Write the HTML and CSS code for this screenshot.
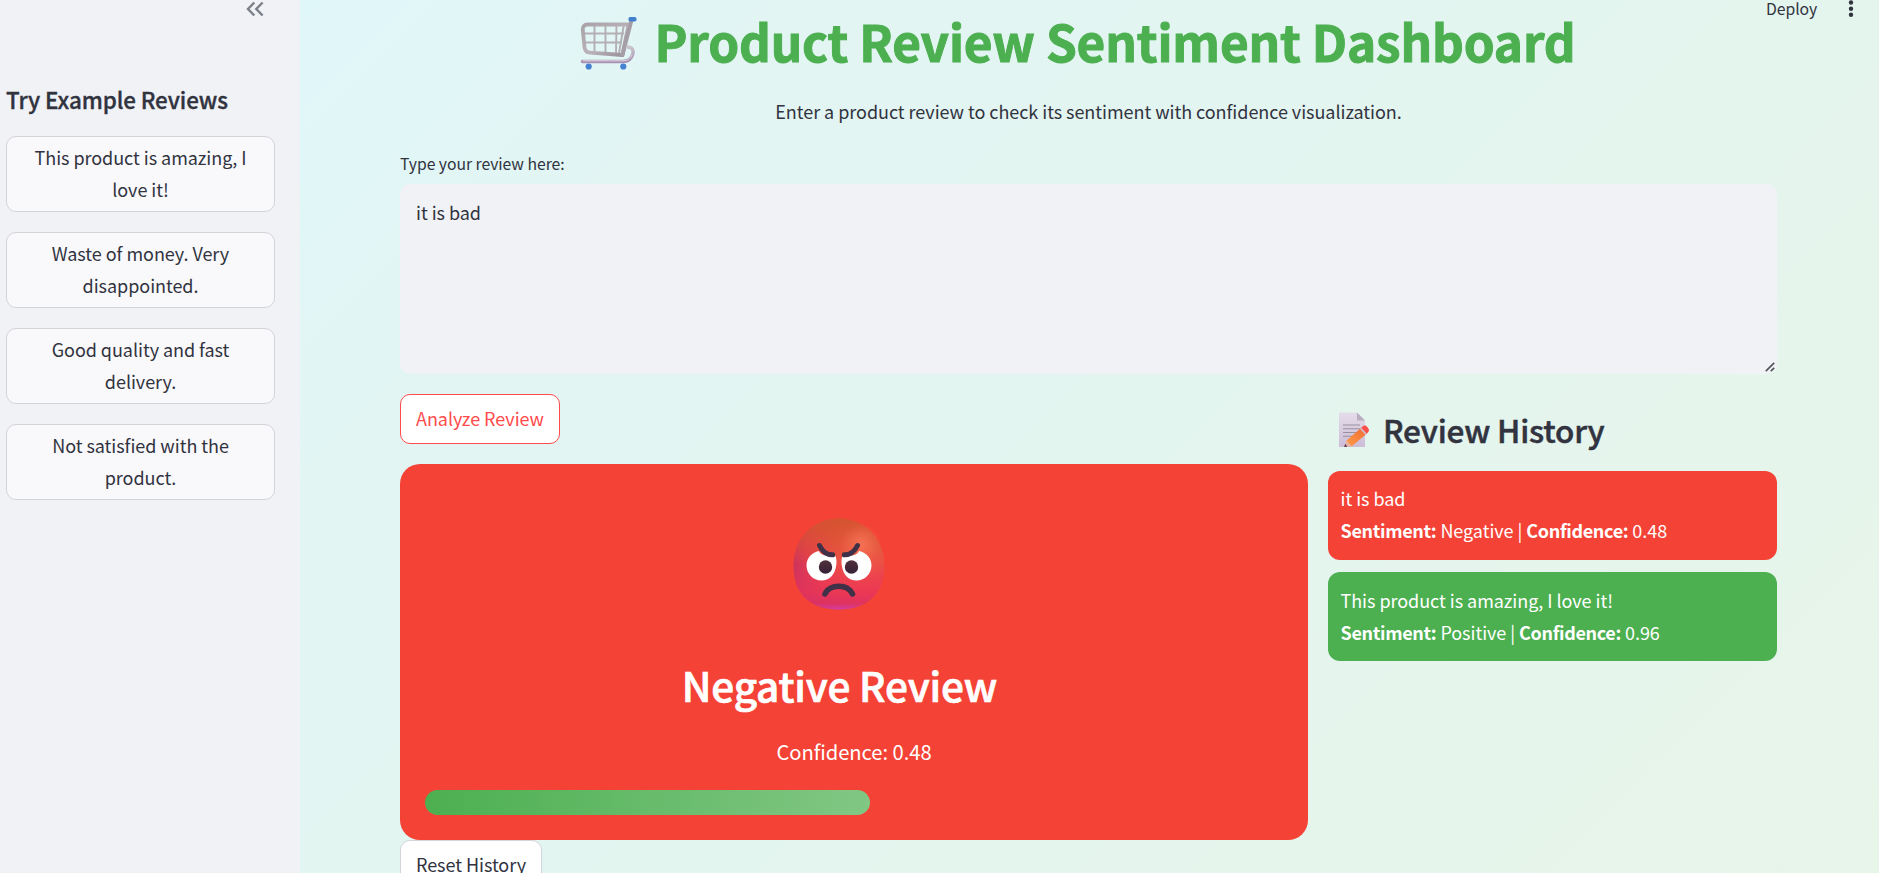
FILE: index.html
```html
<!DOCTYPE html>
<html lang="en">
<head>
<meta charset="utf-8">
<title>Product Review Sentiment Dashboard</title>
<link rel="stylesheet" href="styles.css">
</head>
<body>
<div class="app">
  <aside class="sidebar">
    <div class="sidebar-head">
      <svg class="collapse" width="18" height="16" viewBox="0 0 18 16" fill="none" stroke="#7c7e88" stroke-width="2.400"><path d="M8.300 1.500 2 8l6.300 6.500M16.600 1.500 10.300 8l6.300 6.500"/></svg>
    </div>
    <h3 class="side-title">Try Example Reviews</h3>
    <div class="examples">
      <button class="btn example">This product is amazing, I<br>love it!</button>
      <button class="btn example">Waste of money. Very<br>disappointed.</button>
      <button class="btn example">Good quality and fast<br>delivery.</button>
      <button class="btn example">Not satisfied with the<br>product.</button>
    </div>
  </aside>
  <main class="main">
    <div class="toolbar">
      <span class="deploy">Deploy</span>
      <svg class="dots" width="6" height="24" viewBox="0 0 6 24" fill="#31333f"><circle cx="3" cy="2.500" r="2.200"/><circle cx="3" cy="8.700" r="2.200"/><circle cx="3" cy="14.800" r="2.200"/></svg>
    </div>
    <h1 class="title">
      <svg class="cart" width="57" height="55" viewBox="0 0 57 55" fill="none">
        <defs>
          <linearGradient id="metal" x1="0" y1="0" x2="1" y2="1"><stop offset="0" stop-color="#aaa3a8"/><stop offset=".55" stop-color="#b9b2b8"/><stop offset="1" stop-color="#968c98"/></linearGradient>
          <linearGradient id="rail" x1="0" y1="0" x2="0" y2="1"><stop offset="0" stop-color="#c9c4ca"/><stop offset="1" stop-color="#a891b5"/></linearGradient>
        </defs>
        <path d="M14.500 8v28M25.500 8v29M36.500 8l-.5 29M44 8l-5 29M4 17.500h40M4 26.500h38" stroke="#b3afb3" stroke-width="1.900"/>
        <path d="M48.500 8.500H7.500c-3.200 0-5 2.200-4.700 5.200l1.700 17.500c.4 3.300 2.500 5.200 5.700 5.400L42.500 39z" stroke="url(#metal)" stroke-width="3.800" stroke-linejoin="round"/>
        <path d="M51.500 4 42 40.500" stroke="#a69ea6" stroke-width="4"/>
        <path d="M47.500 31c4.500 0 6.500 3 5.300 7-1.300 4.500-4.800 7.500-9.800 7.500H2.500" stroke="url(#rail)" stroke-width="3.500" stroke-linecap="round"/>
        <path d="M3 44.800h40c4.500 0 7.800-2.400 9-6.300" stroke="#ded9df" stroke-width="1"/>
        <rect x="48.500" y="1" width="8" height="4.400" rx="1.700" fill="#4380cb"/>
        <circle cx="8.700" cy="50.500" r="3.100" fill="#4682d2"/><circle cx="43.300" cy="50.500" r="3.100" fill="#4682d2"/>
      </svg>
      <span class="title-text">Product Review Sentiment Dashboard</span>
    </h1>
    <p class="subtitle"><span>Enter a product review to check its sentiment with confidence visualization.</span></p>
    <label class="label" for="review">Type your review here:</label>
    <div class="field">
      <div class="textarea" id="review">it is bad</div>
      <svg class="grip" width="10" height="10" viewBox="0 0 10 10" stroke="#55565c" stroke-width="1.700"><path d="M.8 9.200 9.200.8M5.800 9.200l3.400-3.400"/></svg>
    </div>
    <div class="columns">
      <section class="left">
        <button class="btn analyze">Analyze Review</button>
        <div class="result">
          <svg class="face" width="92" height="92" viewBox="0 0 92 92" fill="none">
            <defs>
              <radialGradient id="skin" cx=".75" cy=".25" r=".9"><stop offset="0" stop-color="#f5684f"/><stop offset=".35" stop-color="#ec5045"/><stop offset=".68" stop-color="#e53d4e"/><stop offset="1" stop-color="#bd2d66"/></radialGradient>
              <linearGradient id="brow" x1="0" y1="0" x2="0" y2="1"><stop offset="0" stop-color="#d2542c" stop-opacity=".9"/><stop offset=".5" stop-color="#d2542c" stop-opacity="0"/></linearGradient>
              <linearGradient id="chin" x1="0" y1="0" x2="0" y2="1"><stop offset=".5" stop-color="#f5385a" stop-opacity="0"/><stop offset=".8" stop-color="#ee3656" stop-opacity=".7"/><stop offset=".93" stop-color="#e03262" stop-opacity=".8"/><stop offset="1" stop-color="#d63ca5"/></linearGradient>
              <radialGradient id="glow"><stop offset="0" stop-color="#f97458" stop-opacity=".85"/><stop offset="1" stop-color="#f46a50" stop-opacity="0"/></radialGradient>
              <linearGradient id="pupil" x1="0" y1="0" x2="0" y2="1"><stop offset="0" stop-color="#51303c"/><stop offset="1" stop-color="#352137"/></linearGradient>
            </defs>
            <path d="M46 .5C70 .5 91.500 19 91.500 48S72 91.500 46 91.500.5 78 .5 48 22 .5 46 .5z" fill="url(#skin)"/>
            <path d="M46 .5C70 .5 91.500 19 91.500 48S72 91.500 46 91.500.5 78 .5 48 22 .5 46 .5z" fill="url(#brow)"/>
            <path d="M46 .5C70 .5 91.500 19 91.500 48S72 91.500 46 91.500.5 78 .5 48 22 .5 46 .5z" fill="url(#chin)"/>
            <circle cx="68" cy="26" r="20" fill="url(#glow)"/>
            <path d="M26 33c2 5 8 4.500 16.500 5 1 2.500 1.300 6 .7 9.500-1.200 9-6.800 15-14.700 15-8.500 0-15-6.700-15-15.200 0-6.800 4.700-12.800 12.500-14.300z" fill="#fff"/>
            <path d="M66 33c-2 5-8 4.500-16.500 5-1 2.500-1.300 6-.7 9.500 1.200 9 6.800 15 14.700 15 8.500 0 15-6.700 15-15.200 0-6.800-4.700-12.800-12.500-14.300z" fill="#fff"/>
            <circle cx="32.500" cy="49" r="6.700" fill="url(#pupil)"/><circle cx="58.500" cy="49" r="6.700" fill="url(#pupil)"/>
            <g stroke="#403048" stroke-width="5" stroke-linecap="round"><path d="M26.500 27.500c3.200 6.500 8 9.500 13.200 9.300M64.500 27.500c-3.200 6.500-8 9.500-13.200 9.300"/><path d="M32 76c4.500-10.500 22.500-10.500 27.500 0" stroke-width="5.500"/></g>
          </svg>
          <h2 class="verdict">Negative Review</h2>
          <p class="confidence">Confidence: 0.48</p>
          <div class="bar"></div>
        </div>
        <button class="btn reset">Reset History</button>
      </section>
      <section class="right">
        <h2 class="history-title">
          <svg class="memo" width="31" height="36" viewBox="0 0 31 36" fill="none">
            <defs>
              <linearGradient id="paper" x1="0" y1="0" x2="0" y2="1"><stop offset="0" stop-color="#e3dce9"/><stop offset="1" stop-color="#cdbdd7"/></linearGradient>
              <linearGradient id="pencil" x1="1" y1="0" x2="0" y2="1"><stop offset="0" stop-color="#ef6a32"/><stop offset="1" stop-color="#ff9d4a"/></linearGradient>
            </defs>
            <path d="M0 .5h18l8 8V35H0z" fill="url(#paper)"/><path d="M18 .5 26 8.500h-8z" fill="#b9adbe"/>
            <path d="M4 13h17M4 16.700h17M4 20.500h15M4 24.300h9" stroke="#9a919f" stroke-width="1.100"/>
            <path d="M7.500 28.500 22.500 15.500l5.500 6-15.500 13z" fill="url(#pencil)"/>
            <path d="M22 16l2.500-2.200q1.800-1 3.200.5l2 2.600q1 1.700-.4 3L27.500 22z" fill="#f84f48"/><path d="m21 17 5.500 6 1.400-1.200L22.400 15.800z" fill="#d6b5c6"/>
            <path d="m7.500 28.500-2.300 6.300 7-.3z" fill="#e8b2a0"/><path d="m6.300 31.800-1.100 3.100 3-.1z" fill="#50304c"/>
          </svg>
          <span>Review History</span>
        </h2>
        <article class="item negative"><p>it is bad</p><p><b>Sentiment:</b> Negative | <b>Confidence:</b> 0.48</p></article>
        <article class="item positive"><p>This product is amazing, I love it!</p><p><b>Sentiment:</b> Positive | <b>Confidence:</b> 0.96</p></article>
      </section>
    </div>
  </main>
</div>
</body>
</html>
```
FILE: styles.css
```css
* { box-sizing: border-box; }
body, h1, h2, h3, p { margin: 0; }
body {
  font-family: "Noto Sans CJK SC", "Noto Sans", sans-serif;
  font-size: 18px;
  line-height: 32px;
  letter-spacing: -0.045px;
  color: #31333f;
  overflow: hidden;
}
b { letter-spacing: -0.33px; }
.app { display: flex; height: 873px; overflow: hidden; }
.sidebar { width: 300px; flex: none; background: #f0f2f6; padding: 0 25px 0 6px; }
.sidebar-head { height: 84px; display: flex; justify-content: flex-end; padding: 1px 11px 0 0; }
.side-title { font-size: 22.4px; line-height: 30px; font-weight: 500; height: 52px; white-space: nowrap; letter-spacing: -0.1px; -webkit-text-stroke: 0.35px; }
.examples { display: flex; flex-direction: column; gap: 20px; }
.btn {
  font: inherit; letter-spacing: inherit; color: inherit; background: #fff; display: block;
  border: 1px solid #d3d4da; border-radius: 10px; padding: 0 0 2px; text-align: center;
}
.example { height: 76px; background: #f9f9fb; white-space: nowrap; padding-bottom: 3px; }
.main {
  flex: 1; padding: 0 102px 0 100px; position: relative;
  background: linear-gradient(135deg, #e0f7fa, #e2f5f3 20%, #e4f5ee 62%, #e8f5e9);
}
.toolbar { position: absolute; top: 0; right: 25px; display: flex; gap: 31px; height: 24px; }
.deploy { font-size: 15.75px; line-height: 18px; letter-spacing: -0.1px; }
.title {
  display: flex; justify-content: center; align-items: flex-start; gap: 18px;
  height: 92px; padding: 14px 22px 0 0; color: #4caf50; font-size: 49.5px; line-height: 54px; font-weight: 700;
  letter-spacing: -0.16px; white-space: nowrap;
}
.title-text { display: block; -webkit-text-stroke: 1px; }
.cart { margin-top: 2px; }
.subtitle { text-align: center; height: 56px; padding-top: 3px; }
.label { display: block; font-size: 15.75px; height: 36px; line-height: 32px; }
.field { height: 190px; background: #f0f2f6; border-radius: 10px; position: relative; }
.textarea { padding: 12px 16px; }
.grip { position: absolute; right: 2px; bottom: 2px; }
.columns { display: grid; grid-template-columns: 908px 449px; gap: 20px; padding-top: 20px; }
.analyze { width: 160px; height: 50px; color: #ff4b4b; border-color: #ff4b4b; }
.result {
  margin-top: 20px; height: 376px; border-radius: 20px; background: #f44336; color: #fff;
  padding: 54px 25px 25px; display: flex; flex-direction: column; align-items: center;
}
.face { flex: none; margin-right: 30px; }
.verdict { font-size: 40.5px; line-height: 54px; font-weight: 500; letter-spacing: -0.2px; margin: 48px 29px 0 0; -webkit-text-stroke: 0.7px; }
.confidence { font-size: 20.2px; line-height: 36px; margin-top: 22px; }
.bar { width: 445px; height: 25px; margin-top: auto; align-self: flex-start; border-radius: 13px; background: linear-gradient(90deg, #4caf50, #81c784); }
.reset { width: 142px; height: 50px; }
.right { padding-top: 16px; }
.history-title { display: flex; gap: 13px; padding-left: 11px; height: 61px; font-size: 31.5px; line-height: 38px; font-weight: 500; letter-spacing: -0.2px; white-space: nowrap; -webkit-text-stroke: 0.5px; }
.memo { margin-top: 2px; }
.item { height: 89px; border-radius: 12px; color: #fff; padding: 11px 12.500px; margin-bottom: 12px; }
.negative { background: #f44336; }
.positive { background: #4caf50; padding-top: 12px; }
```
